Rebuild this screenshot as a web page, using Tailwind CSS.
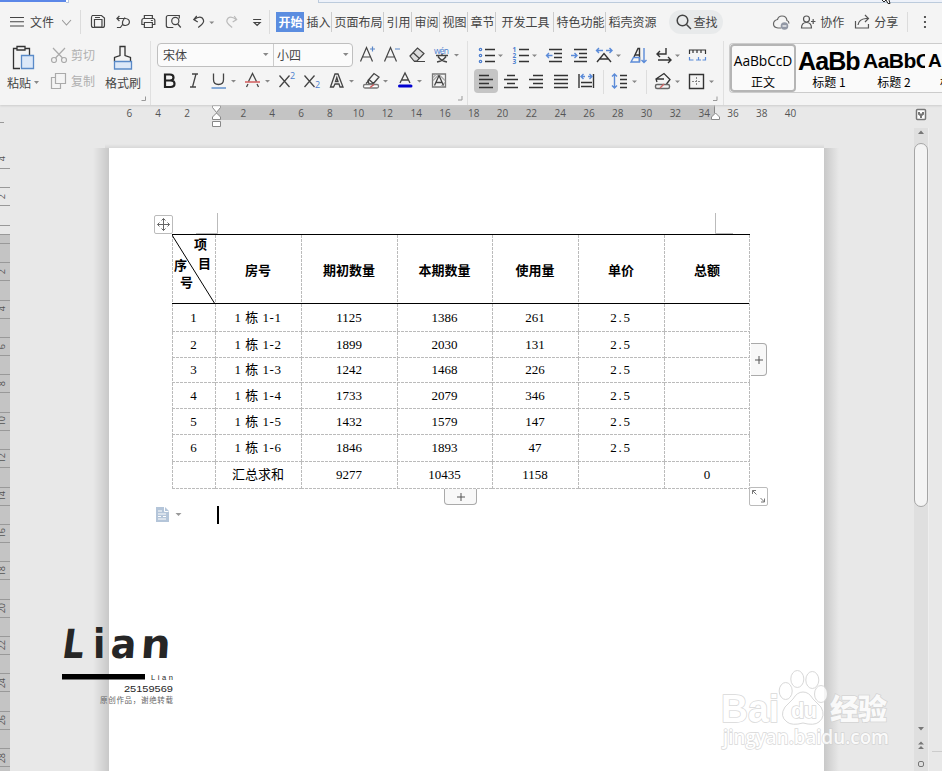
<!DOCTYPE html>
<html lang="zh-CN">
<head>
    <meta charset="UTF-8">
    <meta name="viewport" content="width=device-width, initial-scale=1.0">
    <title>WPS 文字</title>
    <script src="https://cdn.jsdelivr.net/npm/@tailwindcss/browser@4"></script>
</head>
<body class="bg-[#e8e8e8]">
<div class="relative flex h-[771px] w-[942px] flex-col overflow-hidden bg-[#e8e8e8] font-['Noto_Sans_CJK_SC',sans-serif] text-xs leading-none text-[#444]">

    <!-- 工具栏 -->
    <header class="relative z-10 h-[105px] shrink-0 bg-[#f4f4f4] shadow-[0_1px_2px_#ccc]">
        <div class="flex h-[3px]">
            <div class="h-[2px] w-[66px] bg-[#5b87e8]"></div>
            <div class="w-[3px] border-r border-b border-[#b9c8e0] bg-white"></div>
            <div class="w-[249px]"></div>
            <div class="flex-1 border-b border-l border-[#bccbdc] bg-[#eef2fa]"></div>
        </div>
        <svg class="absolute top-0 left-[880px] h-1 w-3" viewBox="880 0 12 4" fill="#fff" stroke="#222"><path d="M882 0l2 2 2-2 2 3.500h2l-1-3.500"/></svg>

        <!-- 菜单行 -->
        <div class="flex h-[38px] items-center">
            <svg class="ml-2.5 h-4 w-5" viewBox="10 14 20 16" fill="none" stroke="#444" stroke-width="1.1"><path d="M10 17.5h14M10 21.8h14M10 26h14"/></svg>
            <span class="w-8">文件</span>
            <svg class="h-4 w-[18px]" viewBox="62 14 18 16" fill="none" stroke="#999" stroke-width="1.1"><path d="M62 20l4.500 5 4.500-5"/></svg>
            <div class="h-6 w-px bg-[#dcdcdc]"></div>
            <svg class="h-6 w-[189px]" viewBox="81 10 189 24" fill="none" stroke="#444" stroke-width="1.200">
                <path d="M92 15.500h9.500l3 2.500v7.500q0 2-2 2H93.500q-2 0-2-2v-8q0-2 1.500-2M94.500 19.500h7.500v7.500h-7.500zM95 17.500h5"/>
                <path d="M117 18.500h8.500q4 .5 4 3.500t-4 3.500q-3 0-3-2.500 0-2 2.500-5.500M119.500 16l-2.500 2.500 2.500 2.500M117 27.500h3.500l2.500-3.500"/>
                <path d="M144.500 18v-2.500h8V18M144.500 24.500H142v-4q0-2 2-2h9q2 0 2 2v4h-2.500M144.500 22.500h8v5h-8zM151 20.500h2"/>
                <path d="M173.500 27.500h-5q-2 0-2-2v-8q0-2 2-2h11v3"/><circle cx="175.500" cy="21" r="3.600"/><path d="M178 24l3 3.500"/>
                <path d="M197 16l-3 3.500 4 2.500M194.500 19.500q5-4 8-1.500 3 3.500-.500 6.500l-3.500 3"/>
                <path d="M234.500 16l2.500 3.500-4 2.500M236.500 19.500q-5-4-8-1.500-3 3.500.5 6.500l3.500 3" stroke="#bbb"/>
                <path d="M253.500 19.500h8M254.500 22.500l3 3 3-3z"/>
                <path d="M209.500 21.500h5l-2.500 2.500z" fill="#888" stroke="none"/>
            </svg>
            <div class="h-6 w-px bg-[#dcdcdc]"></div>
            <nav class="flex h-5 items-center pl-1.5 whitespace-nowrap">
                <span class="flex h-5 w-7 items-center justify-center bg-[#5b8de0] font-bold text-white">开始</span>
                <span class="w-7 border-r border-[#ccc] py-1 pl-0.5">插入</span>
                <span class="w-[52px] border-r border-[#ccc] py-1 pl-0.5">页面布局</span>
                <span class="w-7 border-r border-[#ccc] py-1 pl-0.5">引用</span>
                <span class="w-7 border-r border-[#ccc] py-1 pl-0.5">审阅</span>
                <span class="w-7 border-r border-[#ccc] py-1 pl-0.5">视图</span>
                <span class="w-7 border-r border-[#ccc] py-1 pl-0.5">章节</span>
                <span class="w-[58px] border-r border-[#ccc] py-1 pl-[5px]">开发工具</span>
                <span class="w-[52px] border-r border-[#ccc] py-1 pl-0.5">特色功能</span>
                <span class="w-[63px] py-1 pl-0.5">稻壳资源</span>
            </nav>
            <div class="flex h-6 w-[54px] items-center rounded-full bg-[#e8eaeb] pl-[7px]">
                <svg class="h-4 w-[17px]" viewBox="0 0 17 16" fill="none" stroke="#444" stroke-width="1.500"><circle cx="6.500" cy="6.500" r="5.300"/><path d="M10.500 10.500L15 15"/></svg>
                <span>查找</span>
            </div>
            <svg class="ml-[49px] h-5 w-7" viewBox="772 12 28 20" fill="none" stroke="#666" stroke-width="1.200"><path d="M781 28h-3q-4.500-.5-4.500-4 0-3.500 4-4.500 1-3.500 4.500-3.500 4.500 0 5 4.500 2 .5 2 3"/><circle cx="784.500" cy="26" r="3.800" fill="#9298a5" stroke="none"/><path d="M782.500 26h4" stroke="#fff"/></svg>
            <svg class="h-5 w-5" viewBox="800 12 20 20" fill="none" stroke="#555" stroke-width="1.200"><circle cx="806.500" cy="19" r="3"/><path d="M801.500 28q0-5.500 5-5.500t5 5.500zM811 21.500h4.500M813.200 19v5"/></svg>
            <span class="w-[34px]">协作</span>
            <svg class="h-5 w-5" viewBox="854 12 20 20" fill="none" stroke="#555" stroke-width="1.200"><path d="M855.500 21v7h13v-4M858 25q1-6 8-6.500h2M865 15l3.500 3.500-3.500 3.500"/></svg>
            <span class="w-[33px]">分享</span>
            <div class="h-5 w-px bg-[#dcdcdc]"></div>
            <svg class="h-4 w-[34px]" viewBox="908 14 34 16" fill="#555"><path d="M924 16h2v2h-2zM924 21h2v2h-2zM924 26h2v2h-2z"/></svg>
        </div>

        <!-- 功能区 -->
        <div class="flex h-[64px]">
            <div class="flex w-[151px] shrink-0 border-r border-[#e0e0e0]">
                <div class="w-[49px] pt-1 pl-[7px]">
                    <svg class="h-7 w-8" viewBox="7 45 32 28" fill="none" stroke="#333" stroke-width="1.300"><path d="M20 68.500h-6.500v-20H17M25 48.500h4.500V55M17 46.500h8v3.500h-8z"/><path d="M21.500 55.500h12v13h-12z" fill="#dce8f8" stroke="#5a8ac8"/></svg>
                    <div class="mt-1 flex w-9 items-center whitespace-nowrap">粘贴<svg class="ml-[3px] h-1 w-1.5 shrink-0" viewBox="0 0 6 4" fill="#888"><path d="M0 0h5L2.500 3z"/></svg></div>
                </div>
                <div class="flex flex-col gap-2.5 pt-1.5 text-[#b0b0b0]">
                    <div class="flex h-4 w-14 items-center whitespace-nowrap">
                        <svg class="h-4 w-[22px] shrink-0" viewBox="49 47 22 16" fill="none" stroke="#aaa" stroke-width="1.200"><circle cx="54" cy="60" r="2.500"/><circle cx="64" cy="60" r="2.500"/><path d="M53 48l9.500 10M65 48l-9.500 10"/></svg>剪切
                    </div>
                    <div class="flex h-4 w-14 items-center whitespace-nowrap">
                        <svg class="h-[18px] w-[22px] shrink-0" viewBox="49 72 22 18" fill="none" stroke="#aaa" stroke-width="1.200"><path d="M55.500 73.500h10v10h-10zM55.500 77.500h-4v11h9v-5"/></svg>复制
                    </div>
                </div>
                <div class="pt-1">
                    <svg class="h-7 w-9" viewBox="105 45 36 28" fill="none" stroke="#333" stroke-width="1.300"><path d="M114.500 61.500v-4l5.500-2v-9h5v9l5.500 2v4"/><path d="M114.500 61.500h17v7.500h-17z" fill="#dce8f8" stroke="#5a8ac8"/></svg>
                    <div class="mt-1">格式刷</div>
                </div>
                <svg class="mt-[54px] h-2 w-2 shrink-0" viewBox="0 0 8 8" fill="none" stroke="#999"><path d="M4.500 1.500v4h-4"/></svg>
            </div>

            <div class="w-[317px] shrink-0 border-r border-[#e0e0e0] pt-[2px] pl-1.5">
                <div class="flex h-6 items-center">
                    <div class="flex h-6 w-[196px] rounded border border-[#bfbfbf] bg-[#fbfbfb]">
                        <div class="flex w-[116px] items-center justify-between border-r border-[#ccc] pr-1 pl-[5px]">宋体<svg class="h-1 w-1.5" viewBox="0 0 6 4" fill="#888"><path d="M0 0h5.500L2.750 3z"/></svg></div>
                        <div class="flex flex-1 items-center justify-between pr-[3px] pl-[3px]">小四<svg class="h-1 w-1.5" viewBox="0 0 6 4" fill="#888"><path d="M0 0h5.500L2.750 3z"/></svg></div>
                    </div>
                    <svg class="h-6 w-[112px] shrink-0" viewBox="353 43.5 112 24" fill="none" stroke="#444" stroke-width="1.200">
                        <path d="M360.500 62l6-14 6 14M362.500 57.500h8M384.500 62l6-14 6 14M386.500 57.500h8"/>
                        <path d="M370 49.500h5M372.500 47v5M395 49.500h5" stroke="#5b87c8"/>
                        <path d="M410 56.500l7.500-8 6.500 5.500-7 7.500h-3z" fill="#ddd"/><path d="M413 53l6.500 6M414 62h11"/>
                        <path d="M436 56h12M442 54.500v2M438 57q3 4.500 9 5.500M446 57q-3 4.500-9 5.500" stroke-width="1.400"/>
                        <path d="M454 54.500h5l-2.500 2.500z" fill="#888" stroke="none"/>
                        <text x="434" y="54" font-size="8.500" font-family="Open Sans" fill="#4d7fcf" stroke="none" textLength="15">wén</text>
                    </svg>
                </div>
                <svg class="h-9 w-[309px]" viewBox="157 67.5 309 36" fill="none" stroke="#444" stroke-width="1.300">
                    <path d="M165 75h5q3.500 0 3.500 3t-3.500 3h-5zM165 81h5.500q4 0 4 3.200t-4 3.300H165z" stroke="#222" stroke-width="2.200"/>
                    <path d="M192 74.500h6M190 87.500h6M196 74.500l-3.500 13"/>
                    <path d="M213.500 74v6q0 5 5 5t5-5v-6"/><path d="M211.500 88.500h14.500" stroke="#4b83c8"/>
                    <path d="M248.500 82l4-8 4 8M246.500 87.500l1.500-3M258.500 87.500l-1.500-3"/><path d="M245 82.500h15" stroke="#c44"/>
                    <path d="M279.500 76l10 11.500M289.500 76l-10 11.500M304.500 76l10 11.500M314.500 76l-10 11.500"/>
                    <path d="M330.500 87.500l4.500-13h3l5 13h-3l-1-3h-4l-1.500 3zM335.500 82h2.500l-1.200-4z"/>
                    <path d="M368 81l6-7 5 3.500-6 7h-4zM369 80l5 4.500"/><rect x="363.500" y="85" width="15" height="3.500" rx="1.500" fill="#fff" stroke="#777"/><path d="M366 84l3-3" stroke="#444"/><path d="M370 88l4-3" stroke="#c55"/>
                    <path d="M400 83.500l5-10 5 10M401.500 80.500h7"/><path d="M399.500 86.500h11.500" stroke="#0000d0" stroke-width="3" stroke-linecap="round"/>
                    <path d="M432.500 74.500h13v13h-13z" stroke="#777"/><path d="M433 81l6-6M433 78l3-3M441 87l4-4M439 75l6 6" stroke="#aaa"/><path d="M434.500 86l4.500-10 4.500 10M436 83h6"/>
                    <g fill="#888" stroke="none"><path d="M231 80.500h5l-2.500 2.500zM265 80.500h5l-2.500 2.500zM349 80.500h5l-2.500 2.500zM383 80.500h5l-2.500 2.500zM417 80.500h5l-2.500 2.500z"/></g>
                    <g fill="#4d7fcf" stroke="none" font-size="9" font-family="Open Sans"><text x="290" y="79.500">2</text><text x="315" y="88">2</text></g>
                    <path d="M462 96.500v4h-4" stroke="#999" stroke-width="1"/>
                </svg>
            </div>

            <svg class="h-[64px] w-[255px] shrink-0" viewBox="468 41 255 64" fill="none" stroke="#333" stroke-width="1.400">
                <g stroke-width="1.200" stroke="#4d7fcf"><circle cx="480.500" cy="49.500" r="1.200"/><circle cx="480.500" cy="55.500" r="1.200"/><circle cx="480.500" cy="61.500" r="1.200"/></g>
                <path d="M485 49.500h10M485 55.500h10M485 61.500h10M519 49.500h10M519 55.500h10M519 61.500h10"/>
                <g font-size="6.500" font-weight="bold" font-family="Open Sans" fill="#4d7fcf" stroke="none"><text x="512.500" y="51.500">1</text><text x="512.500" y="57.800">2</text><text x="512.500" y="64">3</text></g>
                <path d="M549 49.500h13M554 53.500h8M554 57.500h8M549 61.500h13M574 49.500h13M579 53.500h8M579 57.500h8M574 61.500h13"/>
                <path d="M546.500 55.500h6M549 53l-2.500 2.500 2.500 2.500M571 55.500h6M574.500 53l2.500 2.500-2.500 2.500M597 50.500h6M599 48l-2.500 2.500 2.500 2.500M606 50.500h6M609.500 48l2.500 2.500-2.500 2.500" stroke="#5b8bd8"/>
                <path d="M597 62l7-8.500 7 8.500M600 59h8"/>
                <path d="M634 57l4-8.500h1.500v13M635.500 55h4"/><path d="M631 62l2.500-4.500h6V62zM644 48v14.500M641.500 60l2.500 2.500 2.500-2.500" stroke="#5b8bd8"/>
                <path d="M666 48v6h-9M660 51l-3 3 3 3M658 60h13M668 57l3 3-3 3"/>
                <path d="M689.500 54v-4h16v4M693 50v3M697 50v3M701 50v3" stroke-width="1.200"/><path d="M689.500 57v3h4M696 60h5M698.500 60v-3M705.500 57v3h-3" stroke="#5b8bd8" stroke-width="1.200"/>
                <rect x="474" y="69" width="24" height="24" rx="4" fill="#c5c5c5" stroke="none"/>
                <path d="M479 75.500h10M479 79.500h14M479 83.500h10M479 87.500h14M507 75.500h8M504 79.500h14M507 83.500h8M504 87.500h14M533 75.500h10M529 79.500h14M533 83.500h10M529 87.500h14M554 75.500h14M554 79.500h14M554 83.500h14M554 87.500h14"/>
                <path d="M579 74v14M593.500 74v14M581 82.500h11M581 86.500h11M620 75.500h7M620 79.500h7M620 83.500h7M620 87.500h7"/>
                <path d="M581 76.500h4M583.500 74l-2.500 2.500 2.500 2.500M588 76.500h4M589.500 74l2.500 2.500-2.500 2.500M614.500 74v14M612 76.500l2.500-2.500 2.500 2.500M612 85.500l2.500 2.500 2.500-2.500" stroke="#5b8bd8"/>
                <path d="M603.500 70v24M646.500 70v24" stroke="#ddd" stroke-width="1"/>
                <path d="M657 82l-1-3 8-5.500 6 6-3.500 4.500M656 79h8" stroke-width="1.300"/><rect x="655.500" y="84.500" width="14" height="4" rx="1.500" stroke="#666"/><path d="M660 88l4-4" stroke="#c66"/>
                <path d="M689.500 74.500h14v14h-14z"/><path d="M696.500 77v9M692 81.500h9" stroke="#888" stroke-width="1" stroke-dasharray="2 1"/>
                <g fill="#888" stroke="none"><path d="M498 54.500h5l-2.500 2.500zM532 54.500h5l-2.500 2.500zM616 54.500h5l-2.500 2.500zM675 54.500h5l-2.500 2.500zM632 80.500h5l-2.500 2.500zM675 80.500h5l-2.500 2.500zM709 80.500h5l-2.500 2.500z"/></g>
                <path d="M717 96.500v4h-4" stroke="#999" stroke-width="1"/>
            </svg>

            <!-- 样式 -->
            <div class="flex min-w-0 flex-1 border-l border-[#e0e0e0] pt-[2px] pl-[5px] text-black">
                <div class="flex h-[50px] flex-1 overflow-hidden rounded-l border border-r-0 border-[#ccc] bg-[#fafafa] whitespace-nowrap">
                    <div class="flex h-[48px] w-[66px] shrink-0 flex-col items-center rounded border-2 border-[#b5b5b5]">
                        <span class="h-[30px] font-['Open_Sans',sans-serif] text-[13.8px] leading-[29px] tracking-[-0.1px]">AaBbCcD</span>
                        <span>正文</span>
                    </div>
                    <div class="ml-0.5 flex w-[62px] shrink-0 flex-col">
                        <span class="h-[32px] font-['Liberation_Sans',sans-serif] text-[25px] leading-[34px] font-bold tracking-[-0.9px]">AaBb</span>
                        <span class="text-center">标题 1</span>
                    </div>
                    <div class="ml-[3px] flex w-[62px] shrink-0 flex-col">
                        <span class="h-[32px] overflow-hidden font-['Liberation_Sans',sans-serif] text-[21px] leading-[34px] font-bold tracking-[-0.5px]">AaBbC</span>
                        <span class="text-center">标题 2</span>
                    </div>
                    <div class="ml-[3px] flex w-[61px] shrink-0 flex-col">
                        <span class="h-[32px] font-['Liberation_Sans',sans-serif] text-[19px] leading-[34px] font-bold">Aa</span>
                        <span class="pl-3">标</span>
                    </div>
                </div>
            </div>
        </div>
    </header>

    <!-- 水平标尺 -->
    <div class="relative flex h-[43px] shrink-0 font-['Open_Sans',sans-serif] text-[10px] leading-4 text-[#555]">
        <div id="ruler-left" class="flex w-[216px] pl-[115px]"></div>
        <div class="h-[15px] w-[499px] bg-[#c4c4c4]"></div>
        <div id="ruler-main" class="absolute top-0 left-[229px] flex"></div>
        <svg class="absolute top-0 left-[210px] h-6 w-[512px]" viewBox="210 105 512 24" fill="#fff" stroke="#888"><path d="M212.500 105.500h8v2l-4 5-4-5zM216.500 113l4 4v2.500h-8V117zM212.500 121.500h8v5h-8zM715.500 113l4 4v2.500h-8V117z"/><path d="M714.500 105v8"/></svg>
    </div>

    <div class="flex h-[623px]">
        <!-- 垂直标尺 -->
        <div class="relative w-[109px]">
            <div class="absolute top-[-26px] left-0 h-px w-1 bg-[#999]"></div>
            <div class="absolute top-[86px] left-0 h-[537px] w-2.5 border-t border-[#999] bg-[#c4c4c4]"></div>
            <div id="ruler-v" class="absolute top-0.5 left-0 w-2.5 font-['Open_Sans',sans-serif] text-[9px] text-[#555]"></div>
            <div class="absolute top-0 right-0 h-full w-4 bg-linear-to-r from-transparent to-[#c8c8c8]"></div>
            <div class="absolute -top-1 right-[-715px] left-[105px] h-1 bg-linear-to-b from-transparent to-[#d8d8d8]"></div>
        </div>

        <!-- 页面 -->
        <main class="relative w-[715px] bg-white pt-[86px] pl-[63px] text-black">
            <div id="table" class="relative grid w-[578px] grid-cols-[43px_86px_96px_95px_86px_86px_86px] grid-rows-[69px_28px_26px_25px_26px_26px_27px_27px] border-t border-black text-[13px]"></div>

            <svg class="absolute top-[62px] left-[44px] h-[26px] w-[580px]" viewBox="153 210 580 26" fill="none" stroke="#bbb">
                <rect x="154.500" y="215.500" width="18" height="18" rx="1.500" fill="#fff"/>
                <path d="M217.500 213v20.500H196M715.500 213v20.500H737"/>
                <path d="M157.500 224.500h12M163.500 218.500v12M159.500 222.500l-2 2 2 2M167.500 222.500l2 2-2 2M161.500 220.500l2-2 2 2M161.500 228.500l2 2 2-2" stroke="#666"/>
            </svg>
            <div class="absolute top-[195px] left-[642px] flex h-[33px] w-4 items-center justify-center rounded-r-sm border border-l-0 border-[#aaa] bg-[#f8f8f8]">
                <svg class="h-2.5 w-2.5" viewBox="0 0 10 10" stroke="#555"><path d="M1 5h8M5 1v8"/></svg>
            </div>
            <div class="absolute top-[341px] left-[335px] flex h-4 w-[33px] items-center justify-center rounded-b-sm border border-t-0 border-[#aaa] bg-[#f8f8f8]">
                <svg class="h-2.5 w-2.5" viewBox="0 0 10 10" stroke="#555"><path d="M1 5h8M5 1v8"/></svg>
            </div>
            <svg class="absolute top-[339px] left-[640px] h-5 w-5" viewBox="749 487 20 20" fill="none" stroke="#bbb"><rect x="749.500" y="487.500" width="18" height="18" rx="1.500" fill="#fff"/><path d="M752.500 494v-3.500h3.500M752.500 490.500l4 4M764.500 498.500v3.500H761M764.500 502l-4-4" stroke="#777"/></svg>
            <svg class="absolute top-[359px] left-[46px] h-4 w-7" viewBox="155 507 28 16" fill="#b4c5d9"><path d="M156 507h9l4 4v11h-13z"/><path d="M158 511h4M158 514h8M158 516.500h3M163 516.500h3M158 519h8M164.500 507v4.500h4" stroke="#fff" fill="none"/><path d="M175.500 513h6l-3 3z" fill="#999"/></svg>
            <div class="absolute top-[358px] left-[108px] h-[18px] w-0.5 bg-black"></div>
        </main>

        <!-- 滚动条 -->
        <div class="relative flex flex-1">
            <div class="w-[90px] bg-linear-to-r from-[#c8c8c8] to-transparent to-[15px]"></div>
            <div class="-mt-5 h-[643px] w-[15px] border-r border-[#eee] bg-[#dfdfdf]"></div>
            <div class="absolute -top-[5px] left-[90px] h-[364px] w-3.5 rounded-full border border-[#a5a5a5] bg-[#f4f4f4]"></div>
            <svg class="absolute top-[-43px] left-[88px] h-[666px] w-[30px]" viewBox="912 105 30 666" fill="#777">
                <path d="M918 134h6l-3-3.500zM918 727h6l-3 3.500zM918 744.500h6l-3-3zM918 749h6l-3-3z"/>
                <rect x="918.500" y="761.500" width="5" height="5" rx="1.500" fill="none" stroke="#777"/>
                <rect x="916.500" y="109.500" width="9" height="10" rx="1" fill="#fff" stroke="#777" stroke-width="1.500"/><path d="M918 112h2v1.500h2V112h2v2.500l-2 1.500v2h-2v-2l-2-1.500z"/>
                <path d="M932 751.500h10" stroke="#ccc"/>
            </svg>
        </div>
    </div>

    <!-- 左下角签名 -->
    <svg class="absolute top-[615px] left-[55px] z-20 h-[95px] w-[125px]" viewBox="55 615 125 95" fill="#262626">
        <g font-family="DejaVu Sans" font-weight="bold" font-size="40">
            <text transform="translate(61 658) skewX(-8) scale(.85 1)">L</text>
            <text transform="translate(93 658) scale(.9 1)">i</text>
            <text transform="translate(110 658) skewX(-4) scale(.95 1)">a</text>
            <text transform="translate(140 658) skewX(-4) scale(1.050 1)">n</text>
        </g>
        <path d="M62 674h83v5.500H62z" fill="#000"/>
        <text x="151" y="679.500" font-size="7.500" font-family="Liberation Sans" textLength="22">Lian</text>
        <text x="124" y="692" font-size="9" font-family="Liberation Sans" textLength="49" lengthAdjust="spacingAndGlyphs">25159569</text>
        <text x="100" y="703" font-size="7.500" font-family="Noto Sans CJK SC" fill="#666" textLength="73">原创作品，谢绝转载</text>
    </svg>

    <!-- 百度经验水印 -->
    <svg class="absolute top-[665px] left-[715px] z-20 h-[90px] w-[180px] opacity-80" viewBox="715 665 180 90" fill="#fff" stroke="#d0d0d0" stroke-width="1.500">
        <g stroke-width="1"><ellipse cx="785.700" cy="691" rx="6.500" ry="8.500"/><ellipse cx="797.300" cy="679" rx="6.500" ry="8.500"/><ellipse cx="812.300" cy="680" rx="6.500" ry="8.500"/><ellipse cx="821" cy="694" rx="6.500" ry="8.500"/>
        <path d="M803 692q6 0 10 7l8 8q5 9-2 15-5 4-16 1-11 3-16-1-8-6-2-15l8-8q4-7 10-7z"/></g>
        <g style="paint-order: stroke">
            <text x="721" y="722" font-size="38" font-weight="bold" font-family="Liberation Sans" textLength="58" lengthAdjust="spacingAndGlyphs">Bai</text>
            <text x="791" y="718" font-size="22" font-weight="bold" font-family="Liberation Sans" textLength="26">du</text>
            <text x="830" y="720" font-size="29" font-weight="900" font-family="Noto Sans CJK SC" textLength="57">经验</text>
            <text x="723" y="744" font-size="20" font-weight="600" font-family="Open Sans" textLength="166" lengthAdjust="spacingAndGlyphs">jingyan.baidu.com</text>
        </g>
    </svg>
</div>

<script>
    // 标尺刻度
    const num = n => `<span class="w-[28.8px] shrink-0 text-center">${n}</span>`;
    document.getElementById('ruler-left').innerHTML = [6, 4, 2].map(num).join('');
    document.getElementById('ruler-main').innerHTML = Array.from({ length: 20 }, (_, i) => num(i * 2 + 2)).join('');

    const ticks = [4, 2, '', 2, 4, 6, 8, 10, 12, 14, 16, 18, 20, 22, 24, 26, 28];
    document.getElementById('ruler-v').innerHTML = ticks.map((n, i) => `
        <div class="h-[37.4px]">
            <div class="flex h-[19px] w-2.5 items-center border-b border-[#999] ${i ? 'border-t' : ''}">
                <span class="-ml-[3px] w-2.5 rotate-180 text-center leading-[10px] [writing-mode:vertical-rl]">${n}</span>
            </div>
        </div>`).join('');

    // 表格数据
    const head = ['房号', '期初数量', '本期数量', '使用量', '单价', '总额'];
    const rows = [
        ['1', '1 栋 1-1', '1125', '1386', '261', '2.5', ''],
        ['2', '1 栋 1-2', '1899', '2030', '131', '2.5', ''],
        ['3', '1 栋 1-3', '1242', '1468', '226', '2.5', ''],
        ['4', '1 栋 1-4', '1733', '2079', '346', '2.5', ''],
        ['5', '1 栋 1-5', '1432', '1579', '147', '2.5', ''],
        ['6', '1 栋 1-6', '1846', '1893', '47', '2.5', ''],
        ['', '汇总求和', '9277', '10435', '1158', '', '0']
    ];
    const side = 'bg-[repeating-linear-gradient(180deg,#bbb_0_3px,transparent_3px_4px)] bg-[length:1px_100%] bg-no-repeat';
    const both = 'bg-[repeating-linear-gradient(180deg,#bbb_0_3px,transparent_3px_4px),repeating-linear-gradient(90deg,#bbb_0_3px,transparent_3px_4px)] bg-[length:1px_100%,100%_1px] bg-[position:left_top,left_bottom] bg-no-repeat';
    const edge = '<i class="absolute top-0 right-0 h-full w-px bg-[repeating-linear-gradient(180deg,#bbb_0_3px,transparent_3px_4px)]"></i>';

    let html = `
        <div class="relative border-b border-black font-bold ${side}">
            <svg class="absolute top-0 left-0 h-[69px] w-[43px]" viewBox="0 0 43 69" stroke="#000"><path d="M0 0L43 69"/></svg>
            <span class="absolute top-[2px] left-[22px]">项</span>
            <span class="absolute top-[21px] left-[26px]">目</span>
            <span class="absolute top-[23px] left-[2px]">序</span>
            <span class="absolute top-[40px] left-[8px]">号</span>
        </div>`;
    head.forEach(t => {
        html += `<div class="flex items-center justify-center border-b border-black font-bold ${side}">${t}</div>`;
    });
    rows.forEach(r => r.forEach(t => {
        const gap = t === '2.5' ? 'tracking-[1.8px]' : t.includes('栋') ? 'tracking-[0.5px]' : '';
        html += `<div class="flex items-center justify-center pb-0.5 font-['Liberation_Serif','Noto_Sans_CJK_SC',serif] ${gap} ${both}">${t}</div>`;
    }));
    document.getElementById('table').innerHTML = html + edge;
</script>
</body>
</html>
